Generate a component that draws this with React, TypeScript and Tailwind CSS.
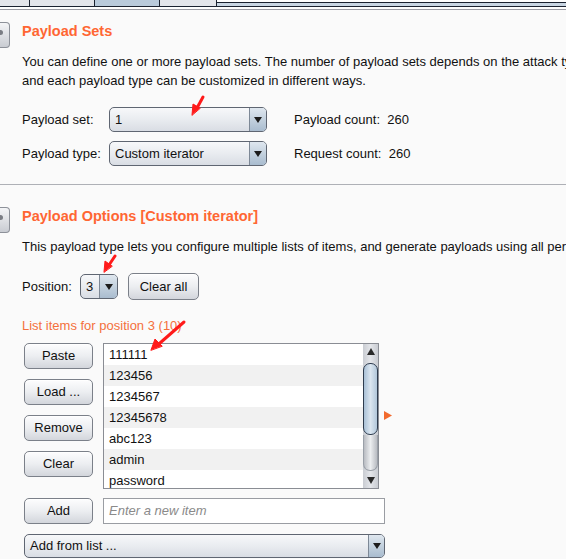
import React from "react";

function Btn({ label, w, h = 26, className = "" }: { label: string; w: number; h?: number; className?: string }) {
  return (
    <div
      style={{ width: w, height: h }}
      className={`flex items-center justify-center rounded-[5px] border border-[#7b8089] bg-gradient-to-b from-[#fdfdfe] via-[#eceef1] to-[#d3d6dc] text-[13px] text-[#111] shadow-[inset_0_1px_0_#ffffff] ${className}`}
    >
      {label}
    </div>
  );
}

function Select({ value, w, h = 25, arrowW = 17 }: { value: string; w: number; h?: number; arrowW?: number }) {
  return (
    <div
      style={{ width: w, height: h }}
      className="flex overflow-hidden rounded-[5px] border border-[#5f6672] bg-gradient-to-b from-[#f7f8fa] via-[#e9ecf0] to-[#d9dde4]"
    >
      <div className="flex flex-1 items-center pl-[5px] text-[13px] text-[#111]">{value}</div>
      <div
        style={{ width: arrowW }}
        className="flex items-center justify-center border-l border-[#7d8896] bg-gradient-to-b from-[#dfe7ef] via-[#c3d1de] to-[#a9bccf]"
      >
        <svg width="8" height="6" viewBox="0 0 8 6">
          <path d="M0 0 L8 0 L4 6 Z" fill="#1c1c1c" />
        </svg>
      </div>
    </div>
  );
}

function SectionIcon() {
  return (
    <div className="relative h-[26px] w-[10px] shrink-0 rounded-r-[4px] border border-l-0 border-[#8d9199] bg-gradient-to-b from-[#f4f5f7] to-[#c9ccd2]">
      <div className="absolute left-0 top-[7px] h-[5px] w-[3px] rounded-r-full bg-[#7a7d84]" />
    </div>
  );
}

const ITEMS = ["111111", "123456", "1234567", "12345678", "abc123", "admin", "password"];

export default function App() {
  return (
    <div className="relative h-[559px] w-[566px] overflow-hidden bg-[#fafafa] font-[family-name:Liberation_Sans,Arial,sans-serif] text-[13px] text-[#111]">
      {/* tab strip */}
      <div className="flex h-[6px] bg-white">
        <div className="w-[30px] border-r border-[#1b2230] bg-[#e3e5ea]" />
        <div className="w-[65px] border-r border-[#1b2230] bg-[#e3e5ea]" />
        <div className="w-[65px] border-r border-[#1b2230] bg-[#b9cadb]" />
        <div className="w-[57px] border-r border-[#1b2230] bg-[#e3e5ea]" />
        <div className="mt-[2px] flex-1 border-t border-[#1b2230] bg-[#c9d6e3]" />
      </div>
      <div className="h-px bg-[#1b2230]" />
      <div className="h-[2px] bg-white" />
      <div className="h-px bg-[#9c9ca4]" />

      {/* Payload Sets */}
      <div className="mt-[12px] flex items-start">
        <SectionIcon />
        <div className="ml-[12px] text-[14.5px] font-bold leading-[18px] text-[#ff6633]">Payload Sets</div>
      </div>
      <div className="mt-[4px] pl-[22px] leading-[19px]">
        <div className="whitespace-nowrap">
          You can define one or more payload sets. The number of payload sets depends on the attack type defined in the Positions tab.
        </div>
        <div className="whitespace-nowrap">and each payload type can be customized in different ways.</div>
      </div>

      <div className="mt-[17px] flex items-center pl-[22px]">
        <div className="w-[87px]">Payload set:</div>
        <Select value="1" w={158} />
        <div className="ml-[27px]">Payload count:&nbsp; 260</div>
      </div>
      <div className="mt-[9px] flex items-center pl-[22px]">
        <div className="w-[87px]">Payload type:</div>
        <Select value="Custom iterator" w={158} />
        <div className="ml-[27px]">Request count:&nbsp; 260</div>
      </div>

      <div className="mt-[18px] h-px bg-[#aeb0b6]" />

      {/* Payload Options */}
      <div className="mt-[22px] flex items-start">
        <SectionIcon />
        <div className="ml-[12px] text-[14.5px] font-bold leading-[18px] text-[#ff6633]">
          Payload Options [Custom iterator]
        </div>
      </div>
      <div className="mt-[4px] whitespace-nowrap pl-[22px] leading-[19px]">
        This payload type lets you configure multiple lists of items, and generate payloads using all permutations of items in the lists.
      </div>

      <div className="mt-[17px] flex items-center pl-[22px]">
        <div className="w-[58px]">Position:</div>
        <Select value="3" w={38} arrowW={18} />
        <Btn label="Clear all" w={71} h={27} className="ml-[10px]" />
      </div>

      <div className="mt-[16px] pl-[22px] leading-[19px] text-[#f4703c]">List items for position 3 (10)</div>

      <div className="mt-[8px] flex items-start pl-[24px]">
        <div className="flex w-[69px] flex-col gap-[10px]">
          <Btn label="Paste" w={69} />
          <Btn label="Load ..." w={69} />
          <Btn label="Remove" w={69} />
          <Btn label="Clear" w={69} />
        </div>
        <div className="ml-[10px] flex h-[146px] w-[276px] overflow-hidden border border-[#8a8d94] bg-white">
          <div className="flex-1 overflow-hidden">
            {ITEMS.map((it, i) => (
              <div
                key={it}
                className={`h-[21px] pl-[5px] leading-[21px] ${i % 2 === 1 ? "bg-[#f1f1f1]" : "bg-white"}`}
              >
                {it}
              </div>
            ))}
          </div>
          {/* scrollbar */}
          <div className="flex w-[15px] flex-col bg-gradient-to-r from-[#c9ccd2] via-[#e4e6ea] to-[#c9ccd2]">
            <div className="flex h-[15px] items-center justify-center">
              <svg width="8" height="7" viewBox="0 0 8 7">
                <path d="M0 7 L8 7 L4 0 Z" fill="#2a2a2a" />
              </svg>
            </div>
            <div className="mt-[4px] h-[72px] rounded-[7px] border border-[#2e3c4e] bg-gradient-to-r from-[#a9c0d6] via-[#dbe6f0] to-[#b2c7da]" />
            <div className="h-[36px] rounded-b-[7px] border border-t-0 border-[#9aa0a8] bg-gradient-to-r from-[#b9bcc2] via-[#eceef0] to-[#b9bcc2]" />
            <div className="mt-auto flex h-[15px] items-center justify-center">
              <svg width="8" height="7" viewBox="0 0 8 7">
                <path d="M0 0 L8 0 L4 7 Z" fill="#2a2a2a" />
              </svg>
            </div>
          </div>
        </div>
        <svg width="8" height="9" viewBox="0 0 8 9" className="ml-[5px] mt-[68px]">
          <path d="M0 0 L8 4.5 L0 9 Z" fill="#f26a2e" />
        </svg>
      </div>

      <div className="mt-[9px] flex items-center pl-[24px]">
        <Btn label="Add" w={69} />
        <div className="ml-[10px] flex h-[26px] w-[282px] items-center border border-[#9a9da3] bg-white pl-[5px] italic text-[#8a8a8a]">
          Enter a new item
        </div>
      </div>

      <div className="mt-[10px] pl-[24px]">
        <Select value="Add from list ..." w={361} h={24} arrowW={16} />
      </div>

      {/* red annotation arrows */}
      <svg className="pointer-events-none absolute left-0 top-0" width="566" height="559">
        <g fill="#ff1a1a" stroke="#ff1a1a" strokeLinecap="round">
          <line x1="203" y1="97" x2="197" y2="108" strokeWidth="3" />
          <path d="M192 115 L193 104 L200 108 Z" strokeWidth="1" />
          <line x1="115" y1="256" x2="109" y2="265" strokeWidth="3" />
          <path d="M104 272 L105 261 L112 266 Z" strokeWidth="1" />
          <line x1="184" y1="322" x2="160" y2="343" strokeWidth="3" />
          <path d="M151 350 L155 339 L162 346 Z" strokeWidth="1" />
        </g>
      </svg>
    </div>
  );
}
